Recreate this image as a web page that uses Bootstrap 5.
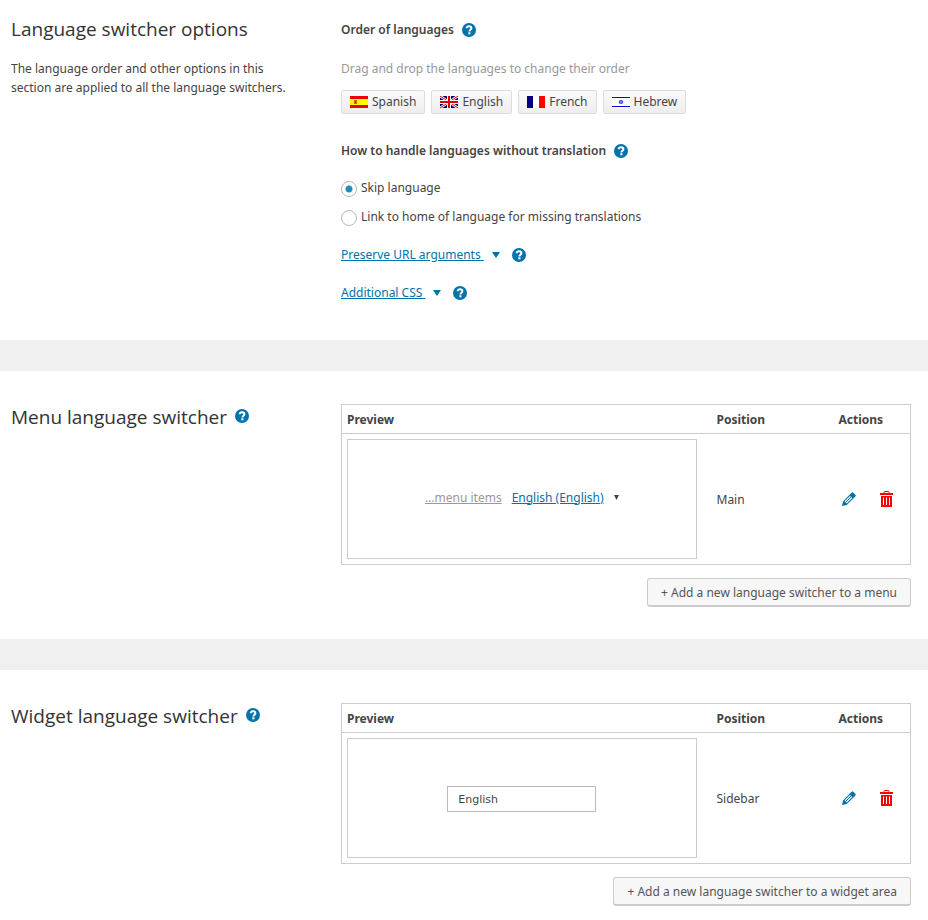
<!DOCTYPE html>
<html lang="en">
<head>
<meta charset="utf-8">
<meta name="viewport" content="width=device-width, initial-scale=1">
<title>Language switcher options</title>
<link href="https://cdn.jsdelivr.net/npm/bootstrap@5.3.0/dist/css/bootstrap.min.css" rel="stylesheet">
<style>
  body { background: #f0f0f0; color: #444; font-family: "Noto Sans", "Open Sans", sans-serif; font-size: 12px; line-height: 19px; }
  a { color: #0073aa; }
  .page { gap: 31px; }
  .panel { background: #fff; padding: 0 17px 32px 11px; }
  .panel-first { padding-bottom: 38px; }
  .panel-last { padding-bottom: 14px; }
  .side { flex: 0 0 330px; padding: 31px 40px 0 0; }
  .main { flex: 1 1 0; min-width: 0; padding-top: 33px; }
  .panel-first .side { padding-top: 14px; }
  .panel-first .main { padding-top: 20px; }
  .title { font-family: "Open Sans", "Noto Sans", sans-serif; font-size: 19px; line-height: 30px; font-weight: 400; color: #333; margin: 0 0 15px; }
  .subtitle { font-size: 12px; line-height: 19px; font-weight: 600; margin: 0; }
  .muted { color: #999; }
  .help { width: 14px; height: 14px; padding: 0; border: 0; background: none; display: block; flex: none; }
  .help svg, .tool svg { display: block; }
  .side .help { margin-top: 7px; }
  .help-gap { margin-top: 20px; }
  .lang-btn { --bs-btn-padding-x: 8px; --bs-btn-padding-y: 0px; --bs-btn-font-size: 12px; --bs-btn-line-height: 22px; --bs-btn-color: #444; --bs-btn-border-color: #ddd; --bs-btn-border-radius: 2px; background: linear-gradient(#fafafa, #eee); gap: 4px; }
  .add-btn { --bs-btn-font-size: 12px; --bs-btn-line-height: 24px; --bs-btn-color: #555; --bs-btn-bg: #f7f7f7; --bs-btn-border-color: #ccc; --bs-btn-border-radius: 3px; border-bottom-width: 2px; padding: 2px 13px 0; }
  .order { gap: 6px; margin: 12px 0 27px; }
  .choices { gap: 10px; margin: 18px 0 19px; }
  .choice { gap: 4px; }
  .choice input { appearance: none; width: 16px; height: 16px; margin: 3px 0 0; border: 1px solid #b4b9be; border-radius: 50%; background: #fff; flex: none; }
  .choice input:checked { background: radial-gradient(circle, #1e8cbe 3px, #fff 4px); }
  .extras { display: grid; gap: 19px; }
  .caret-icon { margin: 0 12px 0 8px; }
  .switchers { border: 1px solid #ccc; table-layout: fixed; width: 100%; margin-bottom: 13px; }
  .switchers th { border-bottom: 1px solid #ccc; padding: 5px 5px 4px; font-weight: 700; }
  .switchers td { padding: 5px; vertical-align: middle; }
  .switchers .pos { width: 122px; padding-left: 15px; }
  .switchers .act { width: 87px; padding-left: 15px; }
  .tools { gap: 24px; padding-left: 3px; }
  .tool { padding: 0; border: 0; background: none; }
  .preview { height: 120px; border: 1px solid #ccc; }
  .menu-demo { gap: 10px; padding-bottom: 4px; }
  .widget-demo { padding-top: 1px; }
  .dropbox { width: 149px; height: 26px; border: 1px solid #bbb; background: #fff; padding: 1px 10px 0; font: 11px/23px "DejaVu Sans", sans-serif; color: #444; text-align: left; }
</style>
<script src="https://cdn.jsdelivr.net/npm/bootstrap@5.3.0/dist/js/bootstrap.bundle.min.js" defer></script>
</head>
<body>
<svg width="0" height="0" class="position-absolute" aria-hidden="true">
  <symbol id="i-help" viewBox="0 0 14 14"><circle cx="7" cy="7" r="7" fill="#0073aa"/><path d="M4.700 5.300C4.700 3.800 5.700 3.200 7 3.200s2.400.7 2.400 2c0 1.500-2 1.600-2 3.200" fill="none" stroke="#fff" stroke-width="2"/><rect x="6.300" y="9.300" width="2.200" height="2" fill="#fff"/></symbol>
  <symbol id="i-down" viewBox="0 0 8 6"><path d="M0 0h8L4 6z" fill="#0073aa"/></symbol>
  <symbol id="i-pencil" viewBox="0 0 14 14"><path d="M0 14l1-4.600L9.600.8Q10.400 0 11.300.7l2 2q.9.9.1 1.700L4.700 13z" fill="#0073aa"/><path d="M2.600 9.300l5.400-5.400 2.200 2.200-5.400 5.400z" fill="#fff"/><path d="M3.600 10.400l6-6" stroke="#0073aa" stroke-width="1"/></symbol>
  <symbol id="i-trash" viewBox="0 0 13 16"><path d="M4 2V1.200Q4 .5 4.800.5h3.400Q9 .5 9 1.200V2" fill="none" stroke="#f00"/><path d="M0 2h13v2H0zM1 5h11v11H1z" fill="#f00"/><path d="M3.500 6.500v7.500M6.500 6.500v7.500M9.500 6.500v7.500" stroke="#fff"/></symbol>
</svg>
<main class="page d-flex flex-column">
  <section class="panel panel-first d-flex">
    <div class="side">
      <h2 class="title">Language switcher options</h2>
      <p class="m-0">The language order and other options in this section are applied to all the language switchers.</p>
    </div>
    <div class="main">
      <div class="d-flex align-items-center gap-2">
        <h3 class="subtitle">Order of languages</h3>
        <button type="button" class="help" aria-label="Help on order"><svg width="14" height="14"><use href="#i-help"/></svg></button>
      </div>
      <p class="muted mb-0 help-gap">Drag and drop the languages to change their order</p>
      <div class="order d-flex flex-wrap">
        <button type="button" class="btn lang-btn d-flex align-items-center"><svg width="18" height="12" viewBox="0 0 18 12"><path fill="#e00" d="M0 0h18v12H0z"/><path fill="#ff0" d="M0 3h18v6H0z"/><path fill="#d60" d="M4 4h3v4H4z"/><path fill="#a20" d="M5 5h1v2H5z"/></svg>Spanish</button>
        <button type="button" class="btn lang-btn d-flex align-items-center"><svg width="18" height="12" viewBox="0 0 18 12"><path fill="#006" d="M0 0h18v12H0z"/><path d="M0 0l18 12M18 0L0 12" stroke="#fff" stroke-width="2.600"/><path d="M0 0l18 12M18 0L0 12" stroke="#d00" stroke-width="1"/><path fill="#fff" d="M7 0h4v12H7zM0 4h18v4H0z"/><path fill="#d00" d="M8 0h2v12H8zM0 5h18v2H0z"/></svg>English</button>
        <button type="button" class="btn lang-btn d-flex align-items-center"><svg width="18" height="12" viewBox="0 0 18 12"><path fill="#fff" d="M0 0h18v12H0z"/><path fill="#000080" d="M0 0h6v12H0z"/><path fill="#f00" d="M12 0h6v12h-6z"/></svg>French</button>
        <button type="button" class="btn lang-btn d-flex align-items-center"><svg width="18" height="12" viewBox="0 0 18 12"><path fill="#fff" d="M0 0h18v12H0z"/><path fill="#00d" d="M0 1h18v1H0zM0 10h18v1H0z"/><path d="M9 4l2 3H7zM9 8L7 5h4z" fill="none" stroke="#33f" stroke-width=".8"/></svg>Hebrew</button>
      </div>
      <div class="d-flex align-items-center gap-2">
        <h3 class="subtitle" id="missing">How to handle languages without translation</h3>
        <button type="button" class="help" aria-label="Help on missing translations"><svg width="14" height="14"><use href="#i-help"/></svg></button>
      </div>
      <div class="choices d-flex flex-column" role="radiogroup" aria-labelledby="missing">
        <div class="choice d-flex"><input type="radio" name="missing" id="skip" checked><label for="skip">Skip language</label></div>
        <div class="choice d-flex"><input type="radio" name="missing" id="home"><label for="home">Link to home of language for missing translations</label></div>
      </div>
      <div class="extras">
        <div class="d-flex align-items-center"><a href="#url">Preserve URL arguments&nbsp;</a><svg class="caret-icon" width="8" height="6"><use href="#i-down"/></svg><button type="button" class="help" aria-label="Help on URL arguments"><svg width="14" height="14"><use href="#i-help"/></svg></button></div>
        <div class="d-flex align-items-center"><a href="#css">Additional CSS&nbsp;</a><svg class="caret-icon" width="8" height="6"><use href="#i-down"/></svg><button type="button" class="help" aria-label="Help on additional CSS"><svg width="14" height="14"><use href="#i-help"/></svg></button></div>
      </div>
    </div>
  </section>

  <section class="panel d-flex">
    <div class="side d-flex align-items-start gap-2">
      <h2 class="title">Menu language switcher</h2>
      <button type="button" class="help" aria-label="Help on menu switcher"><svg width="14" height="14"><use href="#i-help"/></svg></button>
    </div>
    <div class="main">
      <table class="switchers">
        <thead><tr><th scope="col">Preview</th><th scope="col" class="pos">Position</th><th scope="col" class="act">Actions</th></tr></thead>
        <tbody><tr>
          <td><div class="preview menu-demo d-flex align-items-center justify-content-center"><a href="#items" class="muted">...menu items</a><a href="#english">English (English)</a><svg width="5" height="5" viewBox="0 0 5 5"><path d="M0 0h5L2.500 5z" fill="#444"/></svg></div></td>
          <td class="pos">Main</td>
          <td class="act"><div class="tools d-flex align-items-center"><button type="button" class="tool" aria-label="Edit"><svg width="14" height="14"><use href="#i-pencil"/></svg></button><button type="button" class="tool" aria-label="Delete"><svg width="13" height="16"><use href="#i-trash"/></svg></button></div></td>
        </tr></tbody>
      </table>
      <div class="d-flex justify-content-end"><button type="button" class="btn add-btn">+ Add a new language switcher to a menu</button></div>
    </div>
  </section>

  <section class="panel panel-last d-flex">
    <div class="side d-flex align-items-start gap-2">
      <h2 class="title">Widget language switcher</h2>
      <button type="button" class="help" aria-label="Help on widget switcher"><svg width="14" height="14"><use href="#i-help"/></svg></button>
    </div>
    <div class="main">
      <table class="switchers">
        <thead><tr><th scope="col">Preview</th><th scope="col" class="pos">Position</th><th scope="col" class="act">Actions</th></tr></thead>
        <tbody><tr>
          <td><div class="preview widget-demo d-flex align-items-center justify-content-center"><button type="button" class="dropbox">English</button></div></td>
          <td class="pos">Sidebar</td>
          <td class="act"><div class="tools d-flex align-items-center"><button type="button" class="tool" aria-label="Edit"><svg width="14" height="14"><use href="#i-pencil"/></svg></button><button type="button" class="tool" aria-label="Delete"><svg width="13" height="16"><use href="#i-trash"/></svg></button></div></td>
        </tr></tbody>
      </table>
      <div class="d-flex justify-content-end"><button type="button" class="btn add-btn">+ Add a new language switcher to a widget area</button></div>
    </div>
  </section>
</main>
</body>
</html>
